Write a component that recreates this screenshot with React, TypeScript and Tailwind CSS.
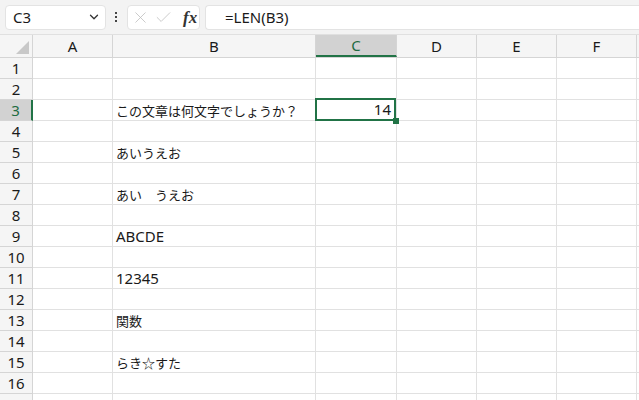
import { ChevronDown, X, Check } from "lucide-react";

const cols = [
  { name: "A", w: "w-[80px]" },
  { name: "B", w: "w-[203px]" },
  { name: "C", w: "w-[81px]" },
  { name: "D", w: "w-[80px]" },
  { name: "E", w: "w-[80px]" },
  { name: "F", w: "w-[80px]" },
];

const bText: Record<number, { t: string; jp: boolean }> = {
  3: { t: "この文章は何文字でしょうか？", jp: true },
  5: { t: "あいうえお", jp: true },
  7: { t: "あい　うえお", jp: true },
  9: { t: "ABCDE", jp: false },
  11: { t: "12345", jp: false },
  13: { t: "関数", jp: true },
  15: { t: "らき☆すた", jp: true },
};

const rows = Array.from({ length: 17 }, (_, i) => i + 1);

export default function App() {
  return (
    <div
      className="w-[639px] h-[400px] overflow-hidden bg-white text-[#1a1a1a]"
      style={{ fontFamily: '"Noto Sans", "Noto Sans CJK JP", sans-serif' }}
    >
      {/* formula bar */}
      <div className="h-[35px] bg-[#f3f3f3] flex items-center pl-[5px] border-b border-[#e0e0e0]">
        <div className="w-[101px] h-[25px] bg-white rounded-[4px] border border-[#e3e3e3] flex items-center justify-between pl-[7px] pr-[4px]">
          <span className="text-[15px] leading-none">C3</span>
          <ChevronDown size={14} strokeWidth={2.2} className="text-[#333]" />
        </div>
        <div className="ml-[9px] w-[2px] flex flex-col items-center gap-[2px]">
          <span className="w-[2px] h-[2px] bg-[#444]" />
          <span className="w-[2px] h-[2px] bg-[#444]" />
          <span className="w-[2px] h-[2px] bg-[#444]" />
        </div>
        <div className="ml-[10px] w-[73px] h-[25px] bg-white rounded-[4px] border border-[#e3e3e3] flex items-center pl-[3px] gap-[4px]">
          <X size={19} strokeWidth={1} className="text-[#bdbdbd]" />
          <Check size={19} strokeWidth={1} className="text-[#bdbdbd]" />
          <span
            className="text-[17px] italic font-bold leading-none text-[#333] ml-[6px]"
            style={{ fontFamily: '"Liberation Serif", serif' }}
          >
            fx
          </span>
        </div>
        <div className="ml-[5px] flex-1 h-[25px] bg-white rounded-l-[4px] border border-r-0 border-[#e3e3e3] flex items-center pl-[19px]">
          <span className="text-[15px] leading-none">=LEN(B3)</span>
        </div>
      </div>

      {/* column headers */}
      <div className="flex h-[23px] bg-[#f5f5f5] border-b border-[#d5d5d5]">
        <div className="w-[33px] shrink-0 border-r border-[#d5d5d5] relative">
          <div
            className="absolute right-[3px] bottom-[3px] w-[13px] h-[13px] bg-[#c8c8c8]"
            style={{ clipPath: "polygon(100% 0, 100% 100%, 0 100%)" }}
          />
        </div>
        {cols.map((c) => (
          <div
            key={c.name}
            className={`${c.w} shrink-0 border-r border-[#d5d5d5] flex items-center justify-center text-[15px] ${
              c.name === "C" ? "bg-[#d2d2d2] text-[#1e6b41] border-b-2 border-b-[#217346]" : ""
            }`}
          >
            {c.name}
          </div>
        ))}
        <div className="flex-1" />
      </div>

      {/* rows */}
      {rows.map((r) => (
        <div key={r} className="flex h-[21px]">
          <div
            className={`w-[33px] shrink-0 border-b border-[#d5d5d5] flex items-center justify-center text-[15px] ${
              r === 3
                ? "bg-[#d2d2d2] text-[#1e6b41] border-r-2 border-r-[#217346]"
                : "bg-[#f5f5f5] border-r border-r-[#d5d5d5]"
            }`}
          >
            {r < 17 ? r : ""}
          </div>
          {cols.map((c) => {
            const sel = r === 3 && c.name === "C";
            const txt = c.name === "B" ? bText[r] : undefined;
            return (
              <div
                key={c.name}
                className={`${c.w} shrink-0 border-r border-b border-[#e1e1e1] flex items-center relative`}
              >
                {txt && (
                  <span
                    className={`pl-[3px] whitespace-nowrap leading-none ${txt.jp ? "text-[13px]" : "text-[15px]"}`}
                    style={txt.jp ? { fontFamily: '"Noto Sans CJK JP", sans-serif' } : undefined}
                  >
                    {txt.t}
                  </span>
                )}
                {sel && (
                  <>
                    <div className="absolute -left-[1px] -top-[2px] right-0 -bottom-[1px] border-2 border-[#217346] flex items-center justify-end pr-[3px]">
                      <span className="text-[15px] leading-none">14</span>
                    </div>
                    <div className="absolute -right-[3px] -bottom-[4px] w-[6px] h-[6px] bg-[#217346] z-10" />
                  </>
                )}
              </div>
            );
          })}
          <div className="flex-1 border-b border-[#e1e1e1]" />
        </div>
      ))}
    </div>
  );
}
